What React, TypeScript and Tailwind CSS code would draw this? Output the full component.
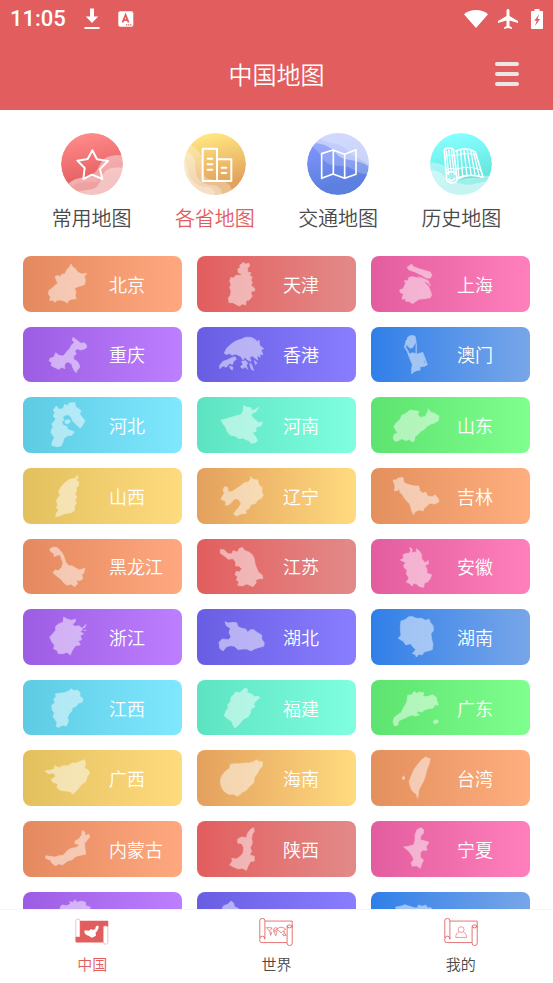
import type { ReactNode } from "react";

interface Province {
  name: string;
  viewBox: string;
  shapes: string[];
}

const GRADIENTS = [
  "from-[#e4895f] to-[#ffa87f]",
  "from-[#e25d5e] to-[#e28a89]",
  "from-[#e35d9e] to-[#ff7fbc]",
  "from-[#9d5de3] to-[#bd7eff]",
  "from-[#695de3] to-[#8a7eff]",
  "from-[#2f7fe8] to-[#77a6e8]",
  "from-[#5dcbe3] to-[#7fe8ff]",
  "from-[#5de3c1] to-[#7fffe0]",
  "from-[#5de36f] to-[#7fff8e]",
  "from-[#e3c05d] to-[#ffdb7f]",
  "from-[#e3a05d] to-[#ffdb7f]",
  "from-[#e3905d] to-[#ffae7f]",
];

const PROVINCES: Province[] = [
  {
    name: "北京",
    viewBox: "24 18 258 167",
    shapes: ["168,42 172,50 180,55 188,66 200,72 215,70 208,80 211,90 209,104 196,108 188,110 178,116 183,124 181,138 184,146 170,148 160,152 158,159 148,154 138,150 126,151 120,157 112,150 104,152 106,140 100,132 102,121 112,114 120,106 128,100 124,90 120,80 128,76 134,80 142,72 150,72 154,62 160,54 164,50"],
  },
  {
    name: "天津",
    viewBox: "546 18 258 167",
    shapes: ["684,37 692,42 702,40 704,48 698,54 698,66 708,68 704,76 712,82 708,90 712,98 708,106 718,114 720,122 710,124 708,132 712,138 706,146 700,152 694,150 692,165 682,162 674,168 664,164 654,158 642,158 640,144 646,136 648,124 644,112 648,104 644,92 648,82 656,84 662,76 676,76 680,72 670,68 668,58 676,52 674,46 680,42"],
  },
  {
    name: "上海",
    viewBox: "288 18 258 167",
    shapes: [
      "410,42 416,50 432,56 452,62 466,66 471,76 466,84 456,85 440,76 420,66 402,60 396,52",
      "430,80 446,86 460,92 466,108 458,98 444,92",
      "398,92 402,82 414,80 430,84 442,90 452,100 462,112 470,134 466,143 450,146 432,148 420,156 412,161 402,154 392,154 392,146 382,148 382,140 386,132 376,128 374,120 384,116 388,108 392,100 388,92",
    ],
  },
  {
    name: "重庆",
    viewBox: "24 231 258 167",
    shapes: ["174,262 182,268 190,274 198,280 208,278 215,286 214,294 206,298 196,300 186,296 180,304 184,312 176,318 176,328 186,334 192,342 194,352 186,362 184,368 178,362 172,350 170,342 160,336 152,338 148,348 150,356 140,352 132,358 122,354 114,350 108,346 110,338 102,332 106,324 116,322 122,308 132,316 144,318 150,312 156,304 164,296 170,284 178,278 172,270"],
  },
  {
    name: "香港",
    viewBox: "546 231 258 167",
    shapes: [
      "628,310 634,296 642,288 652,280 664,272 678,268 692,262 708,262 720,268 728,276 732,270 734,286 746,296 738,300 744,314 734,312 736,322 726,316 728,330 720,324 712,318 704,322 708,334 698,330 690,322 684,330 678,320 670,316 660,312 652,316 642,310 636,314",
      "614,346 624,334 636,330 648,324 660,320 664,328 656,334 652,344 644,340 634,352 624,348 614,356",
      "680,334 692,332 698,340 694,346 698,358 690,350 684,356 676,350 684,344",
      "644,348 654,352 652,360 646,356",
      "704,340 710,344 716,362 708,356",
      "718,332 726,338 722,344",
    ],
  },
  {
    name: "澳门",
    viewBox: "288 231 258 167",
    shapes: [
      "398,262 408,256 420,258 422,268 424,276 418,284 412,294 404,294 398,288 394,276",
      "394,270 388,292 396,304 402,318 405,316 399,302 392,291 398,278",
      "423,280 424,280 424,310 423,310",
      "400,314 412,308 426,312 440,308 444,320 450,326 446,334 452,344 440,350 434,352 436,360 424,362 416,366 410,372 410,356 412,344 406,330",
      "440,308 444,308 457,344 446,350 444,346 453,342",
    ],
  },
  {
    name: "河北",
    viewBox: "24 443 258 167",
    shapes: [
      "170,460 180,460 182,472 190,478 198,484 194,494 202,504 210,514 204,526 196,536 188,530 180,522 174,516 168,504 160,496 150,498 143,504 148,510 141,518 143,526 156,532 158,540 170,544 178,548 170,558 156,560 146,568 144,578 138,590 124,592 110,588 112,576 118,566 112,556 108,550 110,540 114,532 110,524 118,516 122,508 114,500 120,490 114,482 124,470 132,480 144,478 148,466 160,468 162,462",
      "150,514 160,510 167,516 158,524 150,521",
    ],
  },
  {
    name: "河南",
    viewBox: "546 443 258 167",
    shapes: ["686,468 696,474 706,474 712,484 722,480 732,474 722,488 708,494 712,504 722,512 730,520 742,518 740,528 730,532 722,534 724,546 712,550 722,562 728,574 720,580 708,582 702,574 690,570 682,566 672,568 660,560 646,558 636,546 632,534 624,524 618,512 634,508 648,504 662,500 678,496 684,486"],
  },
  {
    name: "山东",
    viewBox: "288 443 258 167",
    shapes: ["406,482 420,484 432,486 428,496 436,504 450,502 458,488 460,478 466,488 478,492 492,500 490,514 480,520 468,524 458,530 448,540 438,546 430,554 420,562 418,574 410,578 404,570 392,574 380,568 370,574 360,576 354,566 358,554 368,552 362,542 356,532 364,520 376,510 380,498 390,494 398,488"],
  },
  {
    name: "山西",
    viewBox: "24 24 258 167",
    shapes: ["186,46 190,54 182,60 192,66 190,78 184,80 184,94 180,102 186,112 180,120 184,130 178,140 178,152 168,158 154,160 142,164 132,168 122,170 124,158 132,150 124,144 128,134 124,122 130,112 136,104 130,96 136,84 144,74 152,66 164,58 174,56 182,54"],
  },
  {
    name: "辽宁",
    viewBox: "546 24 258 167",
    shapes: ["708,50 714,58 728,60 732,74 742,84 740,94 745,106 738,116 728,120 722,130 708,134 702,146 692,150 694,160 678,162 664,168 656,162 664,150 672,142 678,130 670,118 660,116 650,126 642,134 632,136 632,124 618,118 622,108 628,100 624,90 628,80 638,82 640,96 652,94 664,86 676,78 688,68 700,66 706,58"],
  },
  {
    name: "吉林",
    viewBox: "288 24 258 167",
    shapes: ["354,60 362,60 370,54 384,52 386,66 396,72 410,76 422,78 432,78 434,92 444,100 452,96 458,108 472,110 480,104 490,116 492,126 478,132 464,130 456,138 446,146 446,152 430,150 420,156 416,164 410,154 408,144 404,132 396,124 388,114 382,104 374,96 374,86 366,92 358,92 360,78"],
  },
  {
    name: "黑龙江",
    viewBox: "24 237 258 167",
    shapes: ["104,268 112,262 126,262 134,270 142,280 148,292 152,306 160,316 172,318 182,324 194,330 210,324 206,340 200,344 204,356 194,362 184,360 188,372 178,380 168,372 158,376 148,370 140,360 130,352 122,346 114,338 120,330 130,332 140,322 144,308 139,296 136,284 126,286 118,290 116,280 108,276"],
  },
  {
    name: "江苏",
    viewBox: "546 237 258 167",
    shapes: ["616,268 628,270 638,280 650,282 654,272 668,276 672,266 682,262 690,272 702,276 712,284 718,296 720,310 724,322 730,336 742,346 744,356 734,356 722,360 724,368 714,380 704,376 694,372 682,378 668,376 672,366 664,360 668,350 660,344 664,334 674,336 680,326 672,318 662,318 662,306 654,296 640,298 628,288 616,280"],
  },
  {
    name: "安徽",
    viewBox: "288 237 258 167",
    shapes: ["404,262 412,268 410,278 424,276 424,266 432,272 440,284 440,296 450,308 460,302 460,312 450,316 456,328 456,340 470,344 466,356 458,366 448,370 446,382 434,380 424,372 416,370 412,378 402,370 394,366 402,354 394,342 396,330 388,324 386,316 392,308 376,300 386,294 384,284 394,280 402,280 407,272"],
  },
  {
    name: "浙江",
    viewBox: "24 450 258 167",
    shapes: [
      "146,474 156,480 170,484 182,480 180,490 172,496 180,502 192,500 204,510 196,518 206,524 196,530 200,542 190,546 196,558 182,560 176,568 170,578 166,588 156,580 144,584 130,584 126,574 116,570 118,558 110,548 104,534 112,526 122,514 122,502 132,494 144,490",
      "203,506 213,496 209,506",
      "206,514 213,513 212,515",
    ],
  },
  {
    name: "湖北",
    viewBox: "546 450 258 167",
    shapes: ["630,488 640,492 656,490 666,492 668,502 680,508 692,510 698,520 706,512 716,512 726,520 740,528 740,540 748,552 746,562 730,566 718,570 708,576 696,570 684,570 670,572 658,562 646,560 634,564 624,576 614,568 612,550 622,540 640,542 648,534 642,520 646,508 634,500"],
  },
  {
    name: "湖南",
    viewBox: "288 450 258 167",
    shapes: ["400,474 410,472 424,478 440,478 452,484 462,480 466,490 474,500 476,514 468,524 470,540 474,556 472,572 458,576 446,580 442,588 432,586 424,594 420,586 412,584 422,572 414,564 406,554 392,558 386,548 370,538 378,528 376,514 376,500 378,486 390,482"],
  },
  {
    name: "江西",
    viewBox: "24 30 258 167",
    shapes: ["170,56 176,62 188,60 196,70 194,78 204,86 202,96 190,100 184,108 172,114 170,124 162,132 158,142 160,154 154,168 142,166 132,172 124,170 126,158 120,148 114,140 118,130 112,120 110,106 120,98 116,88 124,78 120,72 134,70 148,68 160,64"],
  },
  {
    name: "福建",
    viewBox: "546 30 258 167",
    shapes: ["690,54 698,58 696,68 710,72 718,80 730,78 734,84 722,94 716,102 720,110 708,118 706,130 700,140 688,146 680,154 672,164 660,174 654,166 650,154 640,148 628,138 632,124 640,114 638,104 646,96 648,82 656,74 662,66 674,68 682,62"],
  },
  {
    name: "广东",
    viewBox: "288 30 258 167",
    shapes: [
      "418,64 424,70 434,66 446,68 444,78 456,80 472,74 484,82 486,94 490,106 480,104 474,114 460,116 448,120 442,126 430,124 424,130 434,134 422,138 408,136 398,140 386,146 372,152 368,166 358,168 354,154 358,142 368,134 378,128 384,116 390,106 396,94 398,76 410,74",
      "474,155 482,149 490,152 488,159 478,161",
    ],
  },
  {
    name: "广西",
    viewBox: "24 243 258 167",
    shapes: ["90,306 104,304 118,300 118,290 132,296 146,290 160,290 172,282 186,282 198,276 208,272 212,284 208,296 220,304 224,312 216,324 212,338 200,346 192,356 184,366 172,376 168,368 152,366 136,364 126,356 128,344 114,340 108,332 122,322 116,312 100,314"],
  },
  {
    name: "海南",
    viewBox: "546 243 258 167",
    shapes: ["724,272 732,278 742,278 742,292 734,300 728,312 718,326 716,342 704,352 694,364 682,370 668,382 656,376 640,376 626,366 618,350 616,332 622,318 632,306 644,298 646,286 660,284 674,284 690,282 704,282 716,278"],
  },
  {
    name: "台湾",
    viewBox: "288 243 258 167",
    shapes: [
      "452,264 466,270 462,286 456,300 452,318 446,336 438,350 432,362 428,388 424,376 412,366 406,352 402,338 410,318 418,300 430,284 440,272",
      "381,328 386,320 390,329 385,332",
    ],
  },
  {
    name: "内蒙古",
    viewBox: "24 456 258 167",
    shapes: ["202,484 210,490 210,500 222,496 224,504 216,514 208,524 210,538 212,556 200,558 190,560 180,564 172,572 158,576 150,582 142,588 132,584 122,590 112,584 106,574 92,568 92,560 104,562 120,564 132,560 146,558 156,546 168,538 180,536 190,532 192,526 180,524 180,516 192,510 200,498"],
  },
  {
    name: "陕西",
    viewBox: "546 456 258 167",
    shapes: ["716,476 718,486 712,496 710,508 712,522 706,536 710,548 704,558 718,562 718,576 706,578 700,590 694,604 682,598 670,600 656,594 644,588 652,576 650,568 664,570 676,562 684,552 686,536 680,524 668,522 668,510 680,504 694,506 698,492 708,480"],
  },
  {
    name: "宁夏",
    viewBox: "288 456 258 167",
    shapes: ["438,476 446,482 446,492 438,500 436,512 450,516 462,520 454,532 456,544 442,544 436,552 436,564 446,574 440,584 436,598 424,590 412,592 408,582 416,572 412,562 404,550 396,542 386,534 400,532 416,528 420,514 420,498 426,482"],
  },
  {
    name: "贵州",
    viewBox: "24 667 258 167",
    shapes: ["135,712 142,706 156,708 166,702 164,696 174,698 180,690 186,698 198,694 212,698 212,708 226,712 222,730 228,760 200,790 150,796 126,770 140,740"],
  },
  {
    name: "云南",
    viewBox: "546 667 258 167",
    shapes: ["622,716 626,708 638,704 648,694 656,700 658,710 672,718 700,740 690,780 650,800 620,770"],
  },
  {
    name: "四川",
    viewBox: "288 667 258 167",
    shapes: ["362,712 376,710 390,705 404,710 418,714 428,714 430,706 442,710 452,706 458,714 468,714 480,740 450,790 400,790 370,750"],
  },
];

function StatusBar() {
  return (
    <div className="flex h-[37px] items-center justify-between px-[10px] text-white">
      <div className="flex items-center">
        <span className="font-[Roboto,sans-serif] text-[22px] font-medium leading-none">11:05</span>
        <svg className="ml-[18px] h-[22px] w-4" viewBox="0 0 16 22" fill="currentColor">
          <path d="M6 0.5h4v8h4.2L8 15 1.8 8.500H6zM0.500 19h15v2H0.500z" />
        </svg>
        <svg className="ml-[18px] h-4 w-4" viewBox="0 0 16 16">
          <rect x="0.300" y="0.300" width="15" height="15.400" rx="2" fill="#fff" />
          <path d="M4.500 11.500 7.600 4l3 7.500M5.500 9.200h4.200" fill="none" stroke="#e25d5e" strokeWidth="1.800" />
          <path d="M8 13.800h6" stroke="#e25d5e" strokeWidth="1.200" strokeDasharray="1.300 0.800" />
        </svg>
      </div>
      <div className="flex items-center">
        <svg className="h-[18px] w-6" viewBox="0 0 24 18" fill="currentColor">
          <path d="M12 18 0 4.200C3.500 1.400 7.500 0 12 0s8.500 1.400 12 4.200z" />
        </svg>
        <svg className="ml-2 h-6 w-6" viewBox="0 0 24 24" fill="currentColor">
          <path d="M22 16v-2l-8.500-5V3.500c0-.83-.67-1.500-1.500-1.500s-1.500.67-1.500 1.500V9L2 14v2l8.500-2.500V19L8 20.500V22l4-1 4 1v-1.500L13.500 19v-5.500z" />
        </svg>
        <svg className="ml-[11px] h-5 w-3" viewBox="0 0 12 20">
          <path d="M3.500 0h5v2H11q1 0 1 1v16q0 1-1 1H1q-1 0-1-1V3q0-1 1-1h2.500z" fill="#fff" />
          <path d="M8.200 5 3.300 11.800h2.400L4 17l5-7H6.500z" fill="#e25d5e" />
        </svg>
      </div>
    </div>
  );
}

function Badge({ id, viewBox, cx, from, to, children }: {
  id: string;
  viewBox: string;
  cx: number;
  from: string;
  to: string;
  children: ReactNode;
}) {
  return (
    <svg className="h-[62px] w-[62px]" viewBox={viewBox}>
      <defs>
        <linearGradient id={`${id}-fill`} x1="0" y1="0" x2="0.2" y2="1">
          <stop offset="0.1" stopColor={from} />
          <stop offset="0.9" stopColor={to} />
        </linearGradient>
        <clipPath id={`${id}-clip`}>
          <circle cx={cx} cy="120" r="93" />
        </clipPath>
      </defs>
      <g clipPath={`url(#${id}-clip)`}>
        <circle cx={cx} cy="120" r="93" fill={`url(#${id}-fill)`} />
        {children}
      </g>
    </svg>
  );
}

const CATEGORIES = [
  {
    label: "常用地图",
    icon: (
      <Badge id="common" viewBox="63 27 186 186" cx={156} from="#ff8989" to="#e25d5e">
        <path d="M80 186C98 160 122 162 142 158c26-6 34-30 44-46 12-18 36-20 70-18v130H90z" fill="#fff" opacity=".42" />
        <path d="M92 204c22 2 42-6 60-8 30-2 28-36 44-54 14-14 34-12 60-10v92H110z" fill="#fff" opacity=".36" />
        <path d="M80 184c14 6 26-4 40-8 24-6 44 4 58-4l-10-16c-30 10-60-2-88 28z" fill="#fff" opacity=".12" />
        <path d="m157 79 14 27 33 5-24 24 7 30-31-13-26 13 4-33-22-22 31-5z" fill="none" stroke="#fff" strokeWidth="6" strokeLinejoin="round" />
      </Badge>
    ),
  },
  {
    label: "各省地图",
    active: true,
    icon: (
      <Badge id="province" viewBox="432 27 186 186" cx={525} from="#ffe680" to="#e2a25d">
        <path d="M450 62c26 14 38 28 36 56-2 30 6 48 36 50 28 0 50 6 54 34l-10 24H420V62z" fill="#fff" opacity=".3" />
        <path d="M432 82c24 4 34 20 34 44 0 34 14 54 44 56 20 0 36 8 36 30H420z" fill="#fff" opacity=".3" />
        <path d="M426 108c20 10 16 34 24 50 12 24 30 28 50 30 18 2 26 12 26 26H420z" fill="#fff" opacity=".3" />
        <path d="M488 74h43v97h-43zM531 106h43v65h-43zM503 104h14M503 121h14M503 137h14M545 131h14M545 147h14" fill="none" stroke="#fff" strokeWidth="6" strokeLinejoin="round" strokeLinecap="round" />
      </Badge>
    ),
  },
  {
    label: "交通地图",
    icon: (
      <Badge id="traffic" viewBox="81 27 186 186" cx={174} from="#8498ff" to="#5d80e0">
        <path d="M98 70c24 12 26 44 54 52 26 8 42-2 66 14 22 14 36 18 60 12V20H120z" fill="#fff" opacity=".2" />
        <path d="M106 58c30 0 50 16 66 34 20 22 70 10 98 40V20H130z" fill="#fff" opacity=".42" />
        <path d="M120 44c34 20 58 8 80 34 18 22 42 22 72 50V20H140z" fill="#fff" opacity=".22" />
        <path d="m125 89 34-11 35 13 34-14v74l-34 12-35-13-34 13zM160 78v72M194 91v72" fill="none" stroke="#fff" strokeWidth="5" strokeLinejoin="round" />
      </Badge>
    ),
  },
  {
    label: "历史地图",
    icon: (
      <Badge id="history" viewBox="450 27 186 186" cx={543} from="#86ffff" to="#62e3db">
        <path d="M440 117c22-2 50 0 64 20 26 32 80 16 140 18v70H440z" fill="#fff" opacity=".38" />
        <path d="M440 138c26-2 42 4 54 20 16 18 30 14 52 22 30 8 50-8 90-8v50H440z" fill="#fff" opacity=".42" />
        <path d="M535 172c20-14 48-14 78-8-20-14-48-14-78 8z" fill="#58d8cf" />
        <g fill="none" stroke="#fff" strokeWidth="5" strokeLinejoin="round">
          <path d="M493 80c2-10 24-12 28 0l10 84c0 14-26 18-31 2z" />
          <path d="M526 82c18-10 40-10 60 2l23 76c-26-8-54-8-78 4" />
          <path d="M500 150c6-10 24-10 29 2M505 164c4 8 16 8 20-2" />
          <path d="m499 80 7 72M506 76l8 70M514 78l9 74M531 80l5 78M542 78l6 78M552 78l9 77M562 78l12 77M572 79l14 77M580 83l18 75" strokeWidth="4" />
          <path d="M496 98c8-6 20-6 28-2 20-8 44-10 66-2M500 138c8-6 20-6 28-2 24-8 50-8 74 2" strokeWidth="3" />
        </g>
      </Badge>
    ),
  },
];

// Unrolled scroll, shared by the outlined tab icons
function Scroll({ children }: { children: ReactNode }) {
  return (
    <svg className="h-7 w-[34px]" viewBox="0 0 99 82" fill="none" stroke="#e25d5e" strokeWidth="2.500">
      <path d="M17 9h80M2 58V8q0-7 7.500-7T17 8v54M17 62q0-9-7.500-9T2 62v5q0 5 6 5h74M82 72V26q0-6 7-6 8 0 8 8v45q0 8-7.500 8T82 73M97 28V9M82 23q0 6 7 6 6 0 8-6" />
      {children}
    </svg>
  );
}

const TABS = [
  {
    label: "中国",
    active: true,
    icon: (
      <svg className="h-7 w-[34px]" viewBox="0 0 99 82">
        <path d="M14 8h83v18H83v46H4q-3 0-3-4V54h13z" fill="#e25d5e" />
        <path d="M2 54V8q0-5 6-5t6 5v46M83 28v43q0 6 6 6t7-6V28q0-5-7-5t-6 5z" fill="#fff" stroke="#e8898a" strokeWidth="1.500" />
        <path d="m28 36 12 1 7-5 5 3 7-3 2-8 7-2 1 7-5 10-4 4 1 9-7 4-5 2-8-5-8-3-6-7z" fill="#fff" />
      </svg>
    ),
  },
  {
    label: "世界",
    icon: (
      <Scroll>
        <path d="m22 28 16 1-4 6-5 2-5-5zM31 40l6 2-3 9zM42 32l6-4 5 2-4 5-6 1zM42 38l10 1-3 13-4-8zM53 31l8-4 12 2 5 4-6 4 3 6-6-4-5 5-5-6-6-2zM69 47l7-1 3 5-8 1z" strokeWidth="2" />
      </Scroll>
    ),
  },
  {
    label: "我的",
    icon: (
      <Scroll>
        <circle cx="50" cy="34" r="8.500" strokeWidth="1.800" />
        <path d="M43 41c-5 3-9 7-9 16h32c0-9-4-13-9-16" strokeWidth="1.800" />
      </Scroll>
    ),
  },
];

function ProvinceCard({ province, gradient }: { province: Province; gradient: string }) {
  return (
    <button type="button" className={`flex aspect-[20/7] items-center overflow-hidden rounded-lg bg-linear-to-r ${gradient}`}>
      <svg
        className="h-full w-[86px] shrink-0 opacity-50"
        viewBox={province.viewBox}
        fill="#fff"
        stroke="#fff"
        strokeWidth="2"
      >
        {province.shapes.map((points) => (
          <polygon key={points} points={points} />
        ))}
      </svg>
      <span className="whitespace-nowrap text-lg leading-6 text-white">{province.name}</span>
    </button>
  );
}

export default function App() {
  return (
    <div className="flex h-screen flex-col bg-white font-['Noto_Sans_CJK_SC',sans-serif] font-[350] text-[#4a4a4a]">
      <header className="bg-[#e25d5e]">
        <StatusBar />
        <div className="grid h-[73px] grid-cols-3 items-center">
          <h1 className="col-start-2 text-center text-2xl text-white">中国地图</h1>
          <button type="button" aria-label="菜单" className="mr-[34px] flex flex-col gap-[6px] justify-self-end">
            <span className="h-1 w-6 rounded-full bg-[#ebe6e6]" />
            <span className="h-1 w-6 rounded-full bg-[#ebe6e6]" />
            <span className="h-1 w-6 rounded-full bg-[#ebe6e6]" />
          </button>
        </div>
      </header>

      <main className="min-h-0 flex-1 overflow-y-auto [scrollbar-width:none]">
        <div className="grid grid-cols-4 px-[30px] pt-[23px]">
          {CATEGORIES.map((c) => (
            <button key={c.label} type="button" className={`flex flex-col items-center gap-2 ${c.active ? "text-[#e25d5e]" : ""}`}>
              {c.icon}
              <span className="text-xl leading-[30px]">{c.label}</span>
            </button>
          ))}
        </div>

        <div className="grid grid-cols-3 gap-[15px] px-[23px] pb-4 pt-[23px]">
          {PROVINCES.map((p, i) => (
            <ProvinceCard key={p.name} province={p} gradient={GRADIENTS[i % GRADIENTS.length]} />
          ))}
        </div>
      </main>

      <nav className="grid h-[74px] grid-cols-3 border-t border-[#f5f5f5] bg-white">
        {TABS.map((t) => (
          <button key={t.label} type="button" className={`flex flex-col items-center gap-[6px] pt-2 ${t.active ? "text-[#e25d5e]" : ""}`}>
            {t.icon}
            <span className="text-[15px] leading-6">{t.label}</span>
          </button>
        ))}
      </nav>
    </div>
  );
}
